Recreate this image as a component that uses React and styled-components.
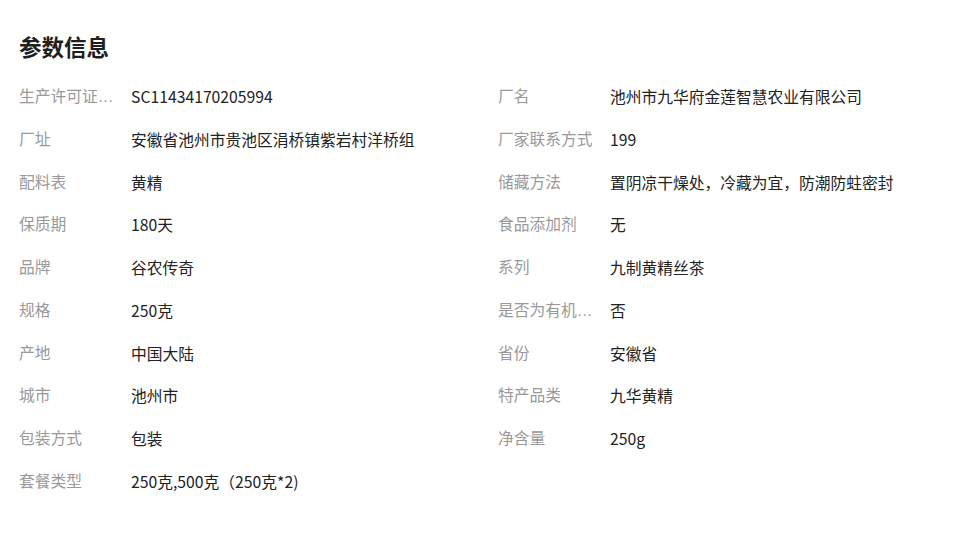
import React from 'react'
import styled, { createGlobalStyle } from 'styled-components'

const GlobalStyle = createGlobalStyle`
    body {
        margin: 0;
        background: #fff;
        font-family: "Noto Sans CJK SC", "Noto Sans", sans-serif;
    }
`

const Panel = styled.section`
    padding: 31px 19px 0 19px;
`

const Title = styled.h2`
    margin: 0 0 24px 0;
    font-size: 22.5px;
    line-height: 30px;
    font-weight: 700;
    color: #1f1f1f;
`

const Grid = styled.div`
    display: grid;
    grid-template-columns: 479px 1fr;
    grid-auto-rows: 42.78px;
`

const Item = styled.div`
    display: flex;
    align-items: flex-start;
    font-size: 15.75px;
    line-height: 24px;
`

const Label = styled.div`
    width: 100px;
    margin-right: 12px;
    color: #999;
    font-family: "Liberation Sans", "Noto Sans CJK SC", sans-serif;
    white-space: nowrap;
    overflow: hidden;
    text-overflow: ellipsis;
`

const Value = styled.div`
    flex: 1;
    color: #222;
    white-space: nowrap;
`

const params = [
    ['生产许可证编号', 'SC11434170205994'],
    ['厂名', '池州市九华府金莲智慧农业有限公司'],
    ['厂址', '安徽省池州市贵池区涓桥镇紫岩村洋桥组'],
    ['厂家联系方式', '199'],
    ['配料表', '黄精'],
    ['储藏方法', '置阴凉干燥处，冷藏为宜，防潮防蛀密封'],
    ['保质期', '180天'],
    ['食品添加剂', '无'],
    ['品牌', '谷农传奇'],
    ['系列', '九制黄精丝茶'],
    ['规格', '250克'],
    ['是否为有机食品', '否'],
    ['产地', '中国大陆'],
    ['省份', '安徽省'],
    ['城市', '池州市'],
    ['特产品类', '九华黄精'],
    ['包装方式', '包装'],
    ['净含量', '250g'],
    ['套餐类型', '250克,500克（250克*2)'],
]

const App = () => {
    return (
        <>
            <GlobalStyle />
            <Panel>
                <Title>参数信息</Title>
                <Grid>
                    {params.map(([label, value]) => (
                        <Item key={label}>
                            <Label>{label}</Label>
                            <Value>{value}</Value>
                        </Item>
                    ))}
                </Grid>
            </Panel>
        </>
    )
}

export default App
